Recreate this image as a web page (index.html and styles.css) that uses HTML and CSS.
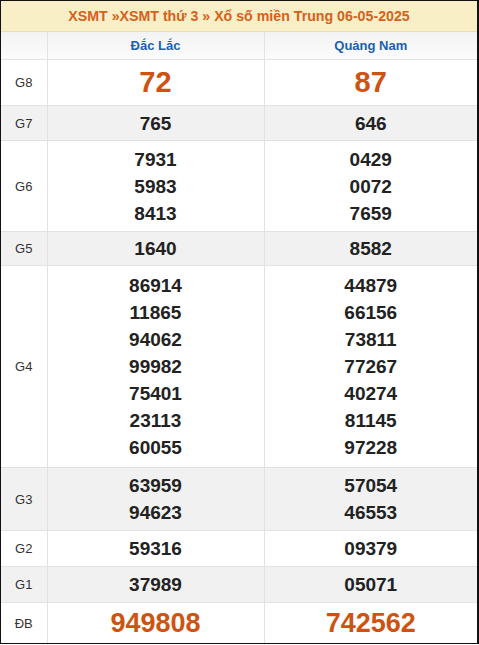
FILE: index.html
```html
<!DOCTYPE html>
<html lang="vi">
<head>
<meta charset="utf-8">
<link rel="stylesheet" href="styles.css">
</head>
<body>
<div class="frame">
  <div class="title">XSMT »XSMT thứ 3 » Xổ số miền Trung 06-05-2025</div>
  <table class="kq">
    <colgroup><col class="c-label"><col class="c-prov1"><col class="c-prov2"></colgroup>
    <tr class="prov-row"><th></th><th>Đắc Lắc</th><th>Quảng Nam</th></tr>
    <tr class="g8"><td class="lbl">G8</td><td class="big">72</td><td class="big">87</td></tr>
    <tr class="alt r-g7"><td class="lbl">G7</td><td class="num">765</td><td class="num">646</td></tr>
    <tr class="r-g6"><td class="lbl">G6</td><td class="num">7931<br>5983<br>8413</td><td class="num">0429<br>0072<br>7659</td></tr>
    <tr class="alt r-g5"><td class="lbl">G5</td><td class="num">1640</td><td class="num">8582</td></tr>
    <tr class="r-g4"><td class="lbl">G4</td><td class="num">86914<br>11865<br>94062<br>99982<br>75401<br>23113<br>60055</td><td class="num">44879<br>66156<br>73811<br>77267<br>40274<br>81145<br>97228</td></tr>
    <tr class="alt r-g3"><td class="lbl">G3</td><td class="num">63959<br>94623</td><td class="num">57054<br>46553</td></tr>
    <tr class="r-g2"><td class="lbl">G2</td><td class="num">59316</td><td class="num">09379</td></tr>
    <tr class="alt r-g1"><td class="lbl">G1</td><td class="num">37989</td><td class="num">05071</td></tr>
    <tr class="db"><td class="lbl">ĐB</td><td class="special">949808</td><td class="special">742562</td></tr>
  </table>
</div>
</body>
</html>
```
FILE: styles.css
```css
html, body { margin: 0; padding: 0; background: #fff; }
body { font-family: "Liberation Sans", Arial, sans-serif; }
.frame {
  width: 476px;
  border-top: 1px solid #111;
  border-left: 1px solid #111;
  border-right: 2px solid #111;
  border-bottom: 1px solid #111;
  background: #fff;
}
.title {
  height: 30px;
  line-height: 30px;
  text-align: center;
  background: #f9efc7;
  border-bottom: 1px solid #eadfb3;
  color: #d4621b;
  font-weight: bold;
  font-size: 14.2px;
}
.kq {
  width: 476px;
  border-collapse: collapse;
  table-layout: fixed;
}
.c-label { width: 46px; }
.c-prov1 { width: 217px; }
.c-prov2 { width: 213px; }
.kq th, .kq td {
  border: 1px solid #e2e2e2;
  text-align: center;
  padding: 0;
}
.kq tr > :first-child { border-left: 0; }
.kq tr > :last-child { border-right: 0; }
.kq tr:last-child > * { border-bottom: 0; }
.prov-row th {
  height: 27px;
  border-top: 0;
  background: linear-gradient(#f3f3f3, #fbfbfb);
  color: #1b5fb0;
  font-size: 13px;
  font-weight: bold;
}
.alt td { background: #f1f1f1; }
.lbl {
  color: #333;
  font-size: 13px;
}
.num {
  color: #222;
  font-size: 19px;
  font-weight: bold;
  line-height: 27px;
}
.r-g7 .num { padding: 4px 0 3px; }
.r-g6 .num { padding: 5px 0 4px; }
.r-g5 .num { padding: 3px 0 3px; }
.r-g4 .num { padding: 6px 0 6px; }
.r-g3 .num { padding: 4px 0 4px; }
.r-g2 .num { padding: 4px 0 4px; }
.r-g1 .num { padding: 4px 0 4px; }
.big {
  height: 45px;
  color: #cf5310;
  font-size: 29px;
  font-weight: bold;
}
.special {
  height: 40px;
  color: #cf5310;
  font-size: 27px;
  font-weight: bold;
}
```
